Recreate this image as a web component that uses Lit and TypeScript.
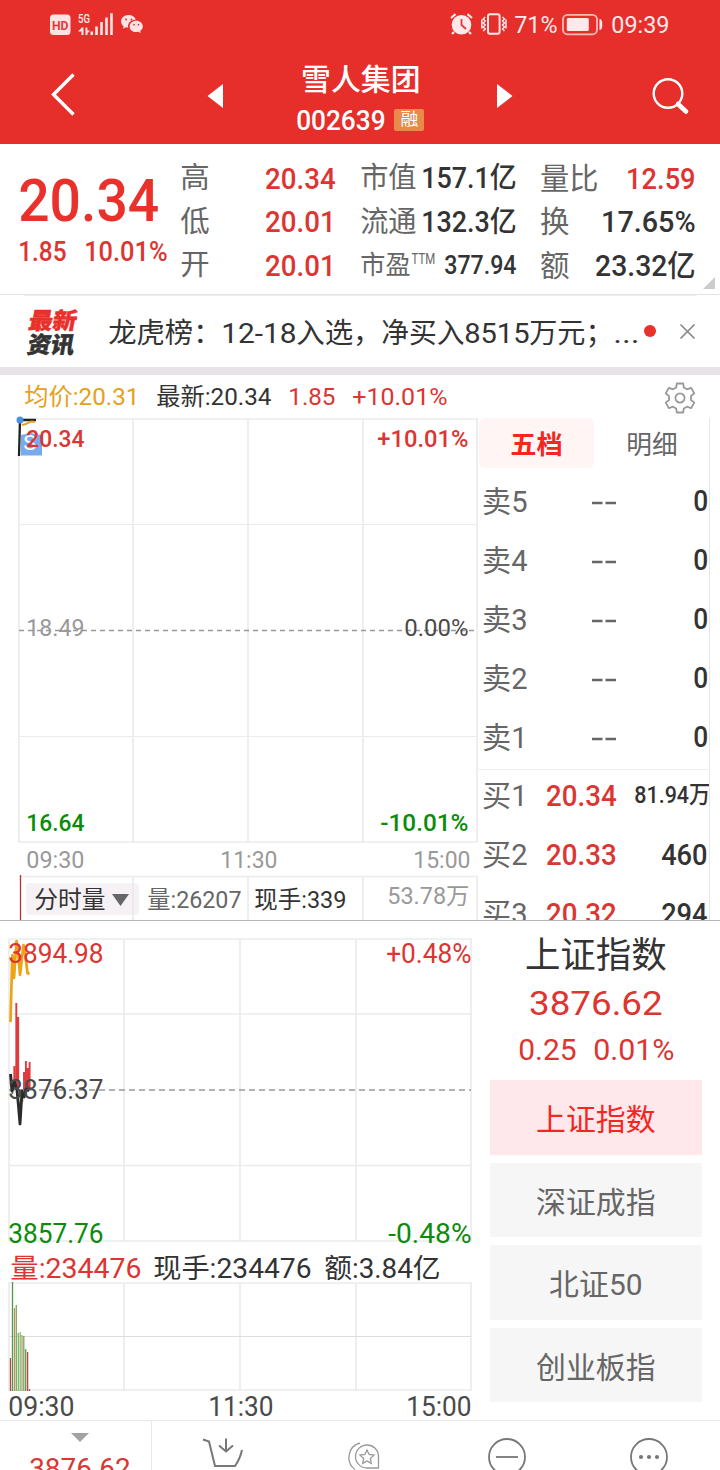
import { LitElement, html, svg, css } from "lit";
import { customElement } from "lit/decorators.js";

/** Text run set to an exact ink width, vertically centred on cy. */
const run = (x: number, w: number, cy: number, size: number, text: string, cls = "") => svg`
  <text class=${cls} x=${x - size * 0.03} y=${cy + size * 0.35} font-size=${size}
    textLength=${w + size * 0.05} lengthAdjust="spacingAndGlyphs">${text}</text>`;

/** Inline box holding one fitted text run. */
const fit = (text: string, w: number, size: number, cls = "") => html`
  <svg class="fit" width=${w} height=${size}>${run(0, w, size / 2, size, text, cls)}</svg>`;

const shared = css`
  :host { display: block; font-family: Roboto, "Noto Sans CJK SC", sans-serif; }
  svg { display: block; flex: none; overflow: visible; }
  text { fill: #333; white-space: pre; }
  .white { fill: #fff; }
  .soft { fill: #ffe9ea; }
  .red { fill: #dc3532; }
  .hot { fill: #ea302b; }
  .vivid { fill: #f5261f; }
  .green { fill: #0b8c0b; }
  .amber { fill: #e5a01c; }
  .grey { fill: #666; }
  .mid { fill: #4a4a4a; }
  .pale { fill: #999; }
  .m { font-weight: 500; }
  .b { font-weight: 700; }
`;

@customElement("status-bar")
class StatusBar extends LitElement {
  static styles = [shared, css`
    .bar { height: 48px; display: flex; justify-content: space-between; padding: 0 51px 0 50px; }
    .badge { fill: #e33a38; }
  `];
  render() {
    return html`<div class="bar">
      <svg width="94" height="48" fill="#ffe3e4">
        <rect x="0" y="14.5" width="20.5" height="20.5" rx="3.5" />
        <text class="b badge" x="2" y="29.700" font-size="13.500" textLength="16.5" lengthAdjust="spacingAndGlyphs">HD</text>
        <text class="soft m" x="28" y="23" font-size="13" textLength="12" lengthAdjust="spacingAndGlyphs">5G</text>
        <path d="M31.500 27.500h2v7.500h-2zM28 31.500l3.800-4V31.500zM35.500 27.500h1.900v7.500h-1.900zM37 30.500h3L37 34z" />
        <path d="M40.500 31.500h2.600V35h-2.600zM45.200 26.500h2.600V35h-2.600zM50.200 22h2.600v13h-2.600zM55.200 17.500h2.600V35h-2.600zM60.200 13.300h2.600V35h-2.600z" />
        <path d="M78.500 15c-4.300 0-7.400 2.900-7.400 6.400 0 2 1 3.700 2.600 4.900l-.7 2.500 3-1.500 2.100.4c-.8-4.500 2.500-8 7.600-8-.7-2.800-3.700-4.700-7.200-4.700z" />
        <path d="M86.300 20.800c-3.800 0-6.700 2.500-6.700 5.600s2.900 5.600 6.700 5.600l2-.3 2.500 1.300-.6-2.200c1.600-1 2.600-2.600 2.600-4.400 0-3.100-2.800-5.600-6.500-5.600z" />
        <g fill="#e33a38"><circle cx="76" cy="19.500" r="1"/><circle cx="81.500" cy="19.500" r="1"/><circle cx="84" cy="24.700" r=".9"/><circle cx="88.500" cy="24.700" r=".9"/></g>
      </svg>
      <svg width="219" height="48" fill="#ffe9ea">
        <circle cx="11.500" cy="24.800" r="9.800" />
        <path d="M1 18l4.500-3.800M17.500 14.200L22 18M4 32l-2 2M19 32l2 2" stroke="#ffe9ea" stroke-width="2.200" fill="none" />
        <path d="M11.500 19v6l4.500 4" stroke="#e33a38" stroke-width="1.800" fill="none" />
        <rect x="38" y="14.200" width="11.600" height="19.600" rx="2" fill="none" stroke="#ffe9ea" stroke-width="2" />
        <path d="M35.200 17l-2 2 2 2-2 2 2 2-2 2 2 2-2 2M31.800 19.500v9M52.500 17l2 2-2 2 2 2-2 2 2 2-2 2 2 2M56 19.500v9" fill="none" stroke="#ffe9ea" stroke-width="1.500" />
        ${run(65, 42, 24.700, 24, "71%", "soft")}
        <rect x="113" y="14.800" width="34" height="19.500" rx="4.500" fill="none" stroke="#ffb9b9" stroke-width="1.800" />
        <rect x="116.800" y="18" width="22" height="13" rx="1.500" />
        <path d="M149.500 19c2.200 0 2.800 2 2.800 5.500s-.6 5.500-2.800 5.500z" />
        ${run(162, 57, 24.700, 24, "09:39", "soft")}
      </svg>
    </div>`;
  }
}

@customElement("title-bar")
class TitleBar extends LitElement {
  static styles = [shared, css`
    .bar { height: 96px; display: flex; align-items: center; padding-left: 51px; }
    .prev { margin-left: 132px; }
    .title { width: 127px; margin: 0 73px 0 74px; display: flex; flex-direction: column; align-items: center; gap: 12px; padding-top: 5px; }
    .code { display: flex; align-items: center; gap: 9px; }
    .tag { width: 30px; height: 22px; border-radius: 2px; background: #e88a48; display: grid; place-items: center; }
    .search { margin-left: 139px; }
  `];
  render() {
    return html`<div class="bar">
      <svg width="24" height="96"><path d="M22.500 26.500L2.500 46.500 22.500 66.500" fill="none" stroke="#fff" stroke-width="3.400" /></svg>
      <svg class="prev" width="16" height="96"><path d="M16 36v24L.5 48z" fill="#fff" /></svg>
      <div class="title">
        ${fit("雪人集团", 118, 30, "white m")}
        <div class="code">${fit("002639", 88, 28, "white m")}<span class="tag">${fit("融", 17, 17, "white")}</span></div>
      </div>
      <svg width="16" height="96"><path d="M0 36v24L15.500 48z" fill="#fff" /></svg>
      <svg class="search" width="36" height="96"><g fill="none" stroke="#fff"><circle cx="16" cy="45.500" r="14.300" stroke-width="2.400" /><path d="M26 56l8 7.500" stroke-width="4.600" stroke-linecap="round" /></g></svg>
    </div>`;
  }
}

@customElement("quote-panel")
class QuotePanel extends LitElement {
  static styles = [shared, css`
    .panel { height: 151px; border-bottom: 1px solid #e3e3e3; display: flex; position: relative; box-sizing: border-box; }
    .price { width: 161px; padding: 26px 0 0 20px; display: flex; flex-direction: column; gap: 7px; }
    .delta { display: flex; gap: 19px; margin-left: -1px; }
    .col { display: flex; flex-direction: column; padding-top: 12px; box-sizing: border-box; }
    .high { width: 154px; margin-right: 26px; }
    .cap { width: 155px; margin-right: 25px; }
    .vol { width: 154px; }
    .row { height: 43.5px; display: flex; align-items: center; justify-content: space-between; }
    .corner { position: absolute; right: 5px; bottom: 5px; }
  `];
  private row = (a: unknown, b: unknown) => html`<div class="row">${a}${b}</div>`;
  render() {
    const r = this.row;
    return html`<div class="panel">
      <div class="price">
        ${fit("20.34", 138, 60, "hot m")}
        <div class="delta">${fit("1.85", 47, 28, "red m")}${fit("10.01%", 82, 28, "red m")}</div>
      </div>
      <div class="col high">
        ${r(fit("高", 28, 29, "grey"), fit("20.34", 69, 30, "red m"))}
        ${r(fit("低", 28, 29, "grey"), fit("20.01", 69, 30, "red m"))}
        ${r(fit("开", 28, 29, "grey"), fit("20.01", 69, 30, "red m"))}
      </div>
      <div class="col cap">
        ${r(fit("市值", 55, 29, "grey"), fit("157.1亿", 94, 29, "m"))}
        ${r(fit("流通", 55, 29, "grey"), fit("132.3亿", 94, 29, "m"))}
        ${r(html`<svg width="75" height="28">${run(0, 49, 14, 26, "市盈", "grey")}${run(51, 23, 8.500, 14, "TTM", "grey")}</svg>`, fit("377.94", 71, 26, "m"))}
      </div>
      <div class="col vol">
        ${r(fit("量比", 57, 30, "grey"), fit("12.59", 68, 30, "red m"))}
        ${r(fit("换", 28, 30, "grey"), fit("17.65%", 93, 30, "m"))}
        ${r(fit("额", 28, 30, "grey"), fit("23.32亿", 99, 30, "m"))}
      </div>
      <svg class="corner" width="12" height="12"><path d="M12 0v12H0z" fill="#ccc" /></svg>
    </div>`;
  }
}

@customElement("news-strip")
class NewsStrip extends LitElement {
  static styles = [shared, css`
    .strip { height: 72px; display: flex; align-items: center; padding-left: 28px; box-sizing: border-box; background: linear-gradient(#eee, #eee) 24px 0 / 672px 1px no-repeat; }
    .logo { width: 81px; }
    .text { width: 535px; display: flex; gap: 1px; margin-top: 4px; }
    .dot { width: 12px; height: 12px; border-radius: 50%; background: #ea302b; margin-right: 24px; }
    .band { height: 8px; background: #e8e3e6; }
    .logo text { font-weight: 900; stroke-width: .5; }
    .logo .hot { stroke: #ea302b; }
    .logo .dark { stroke: #333; }
  `];
  render() {
    return html`<div class="strip">
      <svg class="logo" width="81" height="48">
        <g transform="skewX(-10)">${run(4, 47, 13.500, 23, "最新", "hot")}${run(7, 46, 37.500, 23, "资讯", "dark")}</g>
      </svg>
      <div class="text">
        ${fit("龙虎榜：", 112, 28)}${fit("12-18", 74, 28)}${fit("入选，", 84, 28)}${fit("净买入", 82, 28)}${fit("8515", 64, 28)}${fit("万元；", 83, 28)}${fit("...", 25, 28)}
      </div>
      <span class="dot"></span>
      <svg width="15" height="15"><path d="M.5.5l14 14M14.500.5l-14 14" stroke="#888" stroke-width="1.700" /></svg>
    </div><div class="band"></div>`;
  }
}

@customElement("intraday-chart")
class IntradayChart extends LitElement {
  static styles = [shared];
  render() {
    return html`<svg width="478" height="502" viewBox="0 418 478 502">
      <g fill="none" stroke="#ebebeb" stroke-width="1.700">
        <path d="M19 419H478M19 842H478M19 876.500H478M19 418V843M133 419V842M248 419V842M363 419V842M477 418V842M133 876V920M248 876V920M363 876V920M477 876V920" />
        <path d="M19 524.500H478M19 736.500H478" stroke-width="1.200" />
        <path d="M19 630.500H477" stroke="#999" stroke-width="1.700" stroke-dasharray="5 4" />
      </g>
      <path d="M21 435l5-1 4-2.500 4 2.500 8 1v20.500H21z" fill="#78aaf0" />
      ${run(24, 12, 443, 21, "S", "white")}
      <path d="M20 421L19 456M19 420H36" stroke="#222" stroke-width="2.300" fill="none" />
      <path d="M22 425q5-1 7-2.500T35 422" stroke="#e5a01c" stroke-width="2" fill="none" />
      <circle cx="20" cy="420" r="3.500" fill="#4d8fe0" />
      ${run(27, 57, 439, 23, "20.34", "red m")}
      ${run(378, 90, 439, 23, "+10.01%", "red m")}
      ${run(27, 57, 628, 23, "18.49", "pale")}
      ${run(405, 63, 628, 23, "0.00%", "mid")}
      ${run(27, 57, 823, 23, "16.64", "green m")}
      ${run(381, 87, 823, 23, "-10.01%", "green m")}
      ${run(27, 57, 860, 23, "09:30", "pale")}
      ${run(221, 56, 860, 23, "11:30", "pale")}
      ${run(414, 56, 860, 23, "15:00", "pale")}
      <path d="M20.500 875V920" stroke="#b8323a" stroke-width="1.300" />
      <rect x="26" y="883" width="113" height="32" rx="4" fill="#f5f1f5" />
      <path d="M133 883V915" stroke="#ebe6eb" stroke-width="1.500" />
      ${run(35, 70, 900, 24, "分时量")}
      <path d="M112 894h17l-8.500 12z" fill="#666" />
      ${run(148, 93, 900, 24, "量:26207", "grey")}
      ${run(255, 91, 900, 24, "现手:339")}
      ${run(388, 81, 896, 23, "53.78万", "pale")}
    </svg>`;
  }
}

@customElement("order-book")
class OrderBook extends LitElement {
  static styles = [shared, css`
    .book { width: 231px; height: 502px; overflow: hidden; border-right: 1px solid #e6e6e6; }
    .tabs { display: flex; height: 50px; margin: 0 0 3px 1px; }
    .tab { width: 115px; display: grid; place-items: center; border-radius: 6px; padding-top: 4px; box-sizing: border-box; }
    .on { background: #fff5f5; }
    .row { height: 59px; display: grid; grid-template-columns: 45px 1fr auto; column-gap: 19px; align-items: center; padding: 0 2px 0 5px; }
    .gap { margin-left: 45px; }
    .sell { padding-bottom: 3px; border-bottom: 1.5px solid #eee; }
    .buy { margin-top: -4.5px; }
  `];
  render() {
    const buys: [string, string, string, number, number][] = [
      ["买1", "20.34", "81.94万", 75, 24], ["买2", "20.33", "460", 45, 29], ["买3", "20.32", "294", 45, 29],
    ];
    return html`<div class="book">
      <div class="tabs"><div class="tab on">${fit("五档", 51, 26, "vivid b")}</div><div class="tab">${fit("明细", 50, 26, "grey")}</div></div>
      <div class="sell">${[5, 4, 3, 2, 1].map(n => html`<div class="row">${fit("卖" + n, 44, 30, "grey")}
        <svg class="gap" width="25" height="30"><path d="M0 17h10.500M13.500 17H24" stroke="#666" stroke-width="2.600" /></svg>${fit("0", 13.500, 29, "m")}</div>`)}</div>
      <div class="buy">${buys.map(b => html`<div class="row">${fit(b[0], 44, 30, "grey")}${fit(b[1], 69, 30, "red m")}${fit(b[2], b[3], b[4], "m")}</div>`)}</div>
    </div>`;
  }
}

@customElement("index-chart")
class IndexChart extends LitElement {
  static styles = [shared];
  render() {
    const bars: [number, number, string][] = [
      [10.500, 1358, "#b8444a"], [12.500, 1282, "#4c9a3c"], [14.500, 1308, "#bd8a68"], [16.300, 1305, "#7aa865"],
      [18.300, 1333, "#70c065"], [20.200, 1332, "#8ab878"], [22, 1335, "#c29570"], [23.800, 1336, "#6fa85c"], [25.700, 1349, "#5f9a48"], [27.600, 1352, "#b8444a"], [29.500, 1389, "#b8444a"],
    ];
    return html`<svg width="480" height="499" viewBox="0 921 480 499">
      <g fill="none" stroke="#ebebeb" stroke-width="1.700">
        <path d="M9 939H471V1241H9ZM124 939V1241M240 939V1241M356 939V1241M9 1014H471M9 1165.500H471" />
        <path d="M9 1283H471V1390H9ZM124 1283V1390M240 1283V1390M356 1283V1390" />
        <path d="M9 1336.500H471" stroke="#ddd" stroke-width="1" />
        <path d="M9 1090H471" stroke="#999" stroke-width="1.700" stroke-dasharray="6 4" />
      </g>
      <path d="M10.500 1022L12 965 12.500 955 14 978 16.500 941 18.500 956 20 975 23.500 945 25 952 27.500 973 29.500 974" fill="none" stroke="#eda313" stroke-width="2.700" stroke-linejoin="round" />
      <path d="M14.300 1066V1087M16.300 1003V1089M18.200 1017V1089M24 1072V1090M25.900 1061V1090M27.800 1068V1089M29.600 1062V1090" stroke="#e03a3d" stroke-width="1.900" fill="none" />
      <path d="M12.500 1090v4M22.500 1092v10" stroke="#3fa43c" stroke-width="1.500" />
      <path d="M10.500 1074L12 1091 14.500 1082 17 1090 18.500 1106 20 1124 22 1091 24 1097 26 1089 29 1091" fill="none" stroke="#2b2b2b" stroke-width="2.900" stroke-linejoin="round" />
      ${run(9, 94, 954, 27, "3894.98", "red")}
      ${run(387, 84, 954, 27, "+0.48%", "red")}
      ${run(9, 94, 1090, 27, "3876.37", "mid")}
      ${run(9, 94, 1233.500, 27, "3857.76", "green")}
      ${run(389, 82, 1233.500, 27, "-0.48%", "green")}
      ${run(11, 130, 1268.500, 27, "量:234476", "red")}
      ${run(154, 157, 1268.500, 27, "现手:234476")}
      ${run(325, 115, 1268.500, 27, "额:3.84亿")}
      ${bars.map(([x, y, c]) => svg`<path d="M${x} ${y}V1391" stroke=${c} stroke-width="1.300" />`)}
      ${run(9, 65, 1407, 27, "09:30", "mid")}
      ${run(209, 64, 1407, 27, "11:30", "mid")}
      ${run(407, 64, 1407, 27, "15:00", "mid")}
    </svg>`;
  }
}

@customElement("index-side")
class IndexSide extends LitElement {
  static styles = [shared, css`
    .side { width: 212px; margin-left: 10px; display: flex; flex-direction: column; align-items: center; padding-top: 16px; }
    .value { margin-top: 13px; }
    .delta { display: flex; gap: 18px; margin: 15px 0 16px; }
    .list { display: grid; grid-auto-rows: 74.5px; gap: 8px; width: 212px; }
    .item { background: #f6f6f6; display: grid; place-items: center; padding-top: 4px; box-sizing: border-box; }
    .on { background: #ffe8eb; }
  `];
  render() {
    const items: [string, number][] = [["上证指数", 118], ["深证成指", 118], ["北证50", 92], ["创业板指", 118]];
    return html`<div class="side">
      ${fit("上证指数", 140, 36)}
      <div class="value">${fit("3876.62", 132, 34, "red")}</div>
      <div class="delta">${fit("0.25", 57, 29, "red")}${fit("0.01%", 80, 29, "red")}</div>
      <div class="list">${items.map(([t, w], i) => html`<div class="item ${i ? "" : "on"}">${fit(t, w, 30, i ? "grey" : "vivid")}</div>`)}</div>
    </div>`;
  }
}

@customElement("bottom-bar")
class BottomBar extends LitElement {
  static styles = [shared, css`
    .bar { height: 50px; display: grid; grid-template-columns: 152px repeat(4, 142px); border-top: 1px solid #e8e8e8; box-sizing: border-box; overflow: hidden; }
    .quote { border-right: 1px solid #e8e8e8; display: flex; flex-direction: column; align-items: center; padding: 12px 0 0 9px; gap: 12px; }
    .cell { display: flex; justify-content: center; padding-top: 16px; }
  `];
  render() {
    return html`<div class="bar">
      <div class="quote"><svg width="18" height="9"><path d="M0 0h18L9 9z" fill="#a3a3a3" /></svg>${fit("3876.62", 100, 28, "red")}</div>
      <div class="cell"><svg width="40" height="40" fill="none" stroke="#777" stroke-width="2"><path d="M0 2.500l6 2 6 24.500h20q5-7 7-16M23 1.500v12M16 8.500l7 6 7-6" /></svg></div>
      <div class="cell"><svg width="28" height="40" fill="none" stroke="#999" stroke-width="1.300"><path d="M16 9.500a11.500 11.500 0 1 0 0 23h11.500V20A11.500 11.500 0 0 0 16 9.500zM9 7.500A15 15 0 0 0 4 34" transform="translate(0 -1.500)" /><path d="M16 13l2.100 4.500 4.900.6-3.600 3.400.9 4.900-4.300-2.400-4.300 2.400.9-4.900L9 18.100l4.900-.6z" /></svg></div>
      <div class="cell"><svg width="38" height="38" fill="none" stroke="#777" stroke-width="1.800"><circle cx="19" cy="20" r="18" /><path d="M8 20h22" /></svg></div>
      <div class="cell"><svg width="38" height="38" fill="none" stroke="#777" stroke-width="1.800"><circle cx="19" cy="20" r="18" /><g fill="#777" stroke="none"><circle cx="11" cy="20" r="2.100" /><circle cx="19" cy="20" r="2.100" /><circle cx="27" cy="20" r="2.100" /></g></svg></div>
    </div>`;
  }
}

@customElement("app-root")
class AppRoot extends LitElement {
  static styles = [shared, css`
    :host { width: 720px; height: 1470px; overflow: hidden; background: #fff; }
    .top { background: #e62e2b; }
    .info { height: 43px; display: flex; align-items: center; padding: 0 25px; gap: 18px; box-sizing: border-box; }
    .gear { margin-left: auto; }
    .main, .index { display: flex; }
    .main { height: 502px; }
    .index { border-top: 1px solid #b5b5b5; height: 500px; box-sizing: border-box; }
  `];
  render() {
    return html`
      <div class="top"><status-bar></status-bar><title-bar></title-bar></div>
      <quote-panel></quote-panel>
      <news-strip></news-strip>
      <div class="info">
        ${fit("均价:20.31", 114, 24, "amber")}${fit("最新:20.34", 114, 24)}${fit("1.85", 46, 24, "red")}${fit("+10.01%", 94, 24, "red")}
        <svg class="gear" width="30" height="30" viewBox="-15 -16 30 30" fill="none" stroke="#999" stroke-width="1.800" stroke-linejoin="round">
          <path d="M-3.200-14.500H3.200L3.800-10.500 7-8.700 11-10.200 14.300-4.600 11-2V2L14.300 4.600 11 10.200 7 8.700 3.800 10.500 3.200 14.500H-3.200L-3.800 10.500-7 8.700-11 10.200-14.300 4.600-11 2V-2L-14.300-4.600-11-10.200-7-8.700-3.800-10.500Z" />
          <circle r="4.600" />
        </svg>
      </div>
      <div class="main"><intraday-chart></intraday-chart><order-book></order-book></div>
      <div class="index"><index-chart></index-chart><index-side></index-side></div>
      <bottom-bar></bottom-bar>`;
  }
}
